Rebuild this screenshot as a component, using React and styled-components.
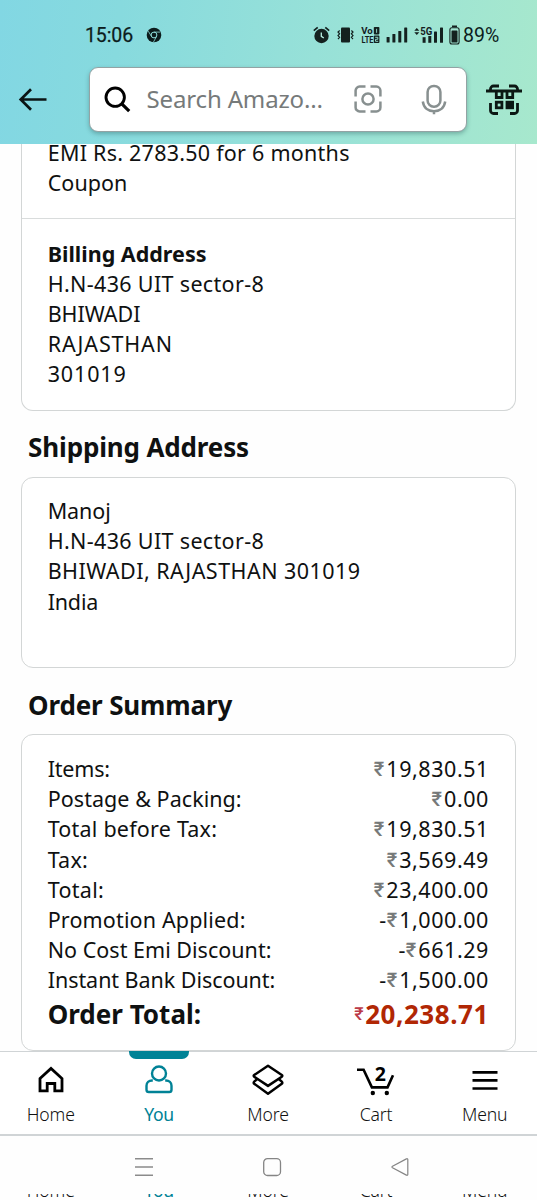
import React from 'react';
import styled, { createGlobalStyle } from 'styled-components';

const GlobalStyle = createGlobalStyle`
  * { box-sizing: border-box; }
  body {
    margin: 0;
    background: #fff;
    color: #0f1111;
    font-family: "Noto Sans", "Open Sans", sans-serif;
  }
  svg { display: block; flex: none; }
`;

const Screen = styled.div`
  width: 537px;
  height: 1200px;
  display: flex;
  flex-direction: column;
  overflow: hidden;
  background: #fefefe;
`;

const Header = styled.header`
  flex: none;
  height: 144px;
  display: flex;
  flex-direction: column;
  background: linear-gradient(96deg, #82d7e3 0%, #87dade 22%, #97e1d8 58%, #a7e8cd 100%);
  z-index: 1;
`;

const StatusBar = styled.div`
  height: 67px;
  padding: 3px 38px 0 85px;
  display: flex;
  align-items: center;
  font-family: Roboto, sans-serif;
  color: #0c1c1c;
`;

const Clock = styled.span`
  width: 61px;
  font-size: 19.5px;
  font-weight: 400;
  letter-spacing: -0.1px;
  -webkit-text-stroke: 0.25px #0c1c1c;
`;

const StatusIcons = styled.div`
  margin-left: auto;
  margin-top: -1px;
  display: flex;
  align-items: center;
`;

const Spaced = styled.div`
  display: flex;
  align-items: center;
  margin-right: ${(p) => p.$gap}px;
`;

const BatteryLevel = styled.span`
  margin: 2px 0 0 3px;
  width: 36px;
  font-size: 19.5px;
  white-space: nowrap;
`;

const SearchRow = styled.div`
  flex: 1;
  display: flex;
  align-items: flex-start;
`;

const IconSlot = styled.div`
  width: ${(p) => p.$width}px;
  height: 65px;
  display: flex;
  align-items: center;
  justify-content: center;
`;

const BackSlot = styled(IconSlot)`
  padding-right: 23px;
`;

const ScanSlot = styled(IconSlot)`
  padding-left: 5px;
`;

const SearchBox = styled.div`
  width: 378px;
  height: 64.5px;
  display: flex;
  align-items: center;
  padding-left: 14px;
  background: #fff;
  border: 1px solid #93a3a4;
  border-radius: 9px;
  box-shadow: 0 2px 4px rgba(40, 90, 90, 0.38);
`;

const Placeholder = styled.span`
  margin-left: 16px;
  width: 207px;
  font-size: 24px;
  line-height: 32px;
  letter-spacing: -0.15px;
  color: #767a7a;
  white-space: nowrap;
`;

const MicSlot = styled.div`
  margin-left: 39px;
`;

const Content = styled.main`
  flex: none;
  height: 907px;
  padding: 0 21.4px;
  overflow: hidden;
`;

const Card = styled.section`
  height: ${(p) => p.$height}px;
  border: 1.5px solid #d3d6d6;
  border-radius: 12px;
  background: #fff;
`;

const PaymentCard = styled(Card)`
  border-top: 0;
  border-radius: 0 0 12px 12px;
`;

const Block = styled.div`
  padding: ${(p) => p.$top}px 25.7px 0 25.3px;
`;

const PaymentBlock = styled(Block)`
  height: 75px;
  display: flex;
  flex-direction: column;
  justify-content: flex-end;
  padding-bottom: 20px;
  border-bottom: 1px solid #d9dcdc;
`;

const Line = styled.div`
  flex: none;
  font-size: 21.5px;
  line-height: 30.2px;
  height: 30.2px;
  font-weight: ${(p) => (p.$bold ? 700 : 400)};
  letter-spacing: ${(p) => p.$track || 0}px;
  white-space: nowrap;
`;

const Heading = styled.h2`
  margin: 0;
  height: ${(p) => p.$height}px;
  padding: ${(p) => p.$top}px 0 0 6.7px;
  font-size: 26px;
  line-height: 36px;
  font-weight: 700;
  letter-spacing: -0.15px;
`;

const SummaryRow = styled.div`
  display: flex;
  justify-content: space-between;
`;

const Amount = styled(Line)`
  display: flex;
  letter-spacing: 0.55px;
`;

const Rupee = styled.span`
  width: 12.5px;
  font-family: Roboto, sans-serif;
  font-size: 20px;
  font-weight: 500;
  letter-spacing: 0;
  color: #767979;
  text-align: left;
`;

const TotalRow = styled(SummaryRow)`
  height: 36px;
  font-size: 26px;
  line-height: 36px;
  font-weight: 700;
  letter-spacing: 0;
`;

const TotalAmount = styled.div`
  display: flex;
  color: #b12704;
  letter-spacing: 0.55px;
`;

const TotalRupee = styled(Rupee)`
  width: 11px;
  font-size: 18px;
  font-weight: 500;
  color: #bb3a48;
`;

const TabBar = styled.nav`
  flex: none;
  height: 85px;
  display: grid;
  grid-template-columns: 101.5px 115px 103px 113px 104.5px;
  border-top: 1.5px solid #d0d4d6;
  border-bottom: 2px solid #d0d4d6;
  background: #fff;
`;

const Tab = styled.div`
  position: relative;
  display: flex;
  flex-direction: column;
  align-items: center;
  color: ${(p) => (p.$active ? '#008296' : '#111')};
`;

const ActiveMark = styled.div`
  position: absolute;
  top: -1px;
  width: 60px;
  height: 7.5px;
  border-radius: 0 0 7px 7px;
  background: #008296;
`;

const TabIcon = styled.div`
  height: 49px;
  padding-top: 12px;
`;

const TabLabel = styled.span`
  font-size: 17.6px;
  line-height: 26px;
  font-weight: ${(p) => (p.$active ? 400 : 300)};
  letter-spacing: ${(p) => (p.$active ? -0.4 : -0.15)}px;
`;

const SystemBar = styled.div`
  flex: none;
  height: 57.500px;
  padding-top: 4px;
  display: flex;
  align-items: center;
  padding-left: 133.500px;
  gap: 108px;
`;

const LabelStrip = styled.div`
  flex: none;
  height: 3px;
  display: grid;
  grid-template-columns: 101.5px 115px 103px 113px 104.5px;
  justify-items: center;
  align-items: start;
  overflow: hidden;
`;

const StripLabel = styled(TabLabel)`
  height: 26px;
  margin-top: -17px;
  color: ${(p) => (p.$active ? '#008296' : '#111')};
`;

const ChromeIcon = () => (
  <svg width="16" height="16" viewBox="0 0 16 16" fill="none">
    <circle cx="8" cy="8" r="7.3" fill="#0c1c1c" />
    <circle cx="8" cy="8" r="2.9" stroke="#8fdedb" strokeWidth="1" />
    <path d="M8 5.1h6.2M5.5 9.5L2.3 4.2M10.5 9.500L7.500 15" stroke="#8fdedb" strokeWidth="0.8" />
  </svg>
);

const AlarmIcon = () => (
  <svg width="17" height="18" viewBox="0 0 17 18" fill="none" stroke="#14211f">
    <circle cx="8.5" cy="10" r="7.2" fill="#14211f" stroke="none" />
    <path d="M.8 4.7L4.7 1.4M16.2 4.7l-3.9-3.3" strokeWidth="1.7" />
    <path d="M8.3 6.500v3.800l2.500 1.700" stroke="#b6efe2" strokeWidth="1.3" />
  </svg>
);

const VibrateIcon = () => (
  <svg width="17" height="16" viewBox="0 0 17 16" fill="none" stroke="#14211f">
    <rect x="4" y="0.5" width="9" height="15" rx="1" fill="#14211f" stroke="none" />
    <path d="M2.7 3.5L1 5l1.6 1.8L1 8.6l1.6 1.7L1 12M14.4 3.5L16 5l-1.6 1.8L16 8.6l-1.6 1.7L16 12" strokeWidth="1.2" />
  </svg>
);

const VolteIcon = () => (
  <svg width="19" height="18" viewBox="0 0 19 18" fill="#14211f" fontFamily="Roboto, sans-serif" fontWeight="700">
    <text x="0.3" y="8.200" fontSize="9.500" textLength="11.500" lengthAdjust="spacingAndGlyphs">Vo</text>
    <text x="0.5" y="16.800" fontSize="9.500" textLength="12" lengthAdjust="spacingAndGlyphs">LTE</text>
    <rect x="12.8" y="1" width="5.6" height="7.4" rx="0.8" />
    <rect x="12.8" y="9.6" width="5.6" height="7.4" rx="0.8" />
    <path d="M15.6 2.8v4M14.200 11.300h2.600v2h-2.300v2h2.700" fill="none" stroke="#9be3d6" strokeWidth="0.9" />
  </svg>
);

const SignalIcon = () => (
  <svg width="22" height="16" viewBox="0 0 22 16" fill="#14211f">
    <rect x="0.6" y="10" width="3" height="5.6" rx="0.6" />
    <rect x="6.4" y="7" width="3" height="8.6" rx="0.6" />
    <rect x="12.3" y="4" width="3" height="11.6" rx="0.6" />
    <rect x="18.2" y="0.4" width="3" height="15.2" rx="0.6" />
  </svg>
);

const Signal5GIcon = () => (
  <svg width="30" height="18" viewBox="0 0 30 18" fill="#14211f">
    <path d="M.3 4.800L2.800 2l2.500 2.800zM.3 6.200l2.500 2.800 2.500-2.800z" />
    <text x="6.3" y="8.900" fontSize="10.500" fontWeight="700" fontFamily="Roboto, sans-serif" textLength="12" lengthAdjust="spacingAndGlyphs">5G</text>
    <rect x="8.6" y="11.2" width="3" height="5.6" />
    <rect x="14.3" y="10" width="3" height="6.8" />
    <rect x="20" y="5.6" width="3" height="11.2" rx="0.6" />
    <rect x="26" y="1.5" width="3" height="15.3" rx="0.6" />
  </svg>
);

const BatteryIcon = () => (
  <svg width="11" height="20" viewBox="0 0 11 20" fill="none">
    <path d="M3 .5h5v1.700H3z" fill="#14211f" />
    <rect x="0.9" y="2.7" width="9.2" height="16.3" rx="2" stroke="#14211f" strokeWidth="1.1" />
    <rect x="2.5" y="5.500" width="6" height="12" rx="0.6" fill="#14211f" />
  </svg>
);

const BackIcon = () => (
  <svg width="30" height="26" viewBox="0 0 30 26" fill="none" stroke="#0b1414" strokeWidth="2.700">
    <path d="M28.500 12.500H3M13 2.200L2.700 12.500 13 22.800" />
  </svg>
);

const SearchIcon = () => (
  <svg width="27" height="27" viewBox="0 0 27 27" fill="none" stroke="#000" strokeWidth="2.9">
    <circle cx="11.2" cy="11.2" r="9.2" />
    <path d="M17.8 17.8l7.4 7.4" strokeWidth="3.2" />
  </svg>
);

const LensIcon = () => (
  <svg width="28" height="28" viewBox="0 0 28 28" fill="none" stroke="#889090" strokeWidth="2.5">
    <circle cx="14" cy="14" r="5.6" />
    <path d="M1.6 11.500V5.600a4 4 0 0 1 4-4h5.900M16.500 1.600h5.900a4 4 0 0 1 4 4v5.900M26.400 16.500v5.900a4 4 0 0 1-4 4h-5.900M11.500 26.400H5.600a4 4 0 0 1-4-4v-5.900" />
  </svg>
);

const MicIcon = () => (
  <svg width="26" height="31" viewBox="0 0 26 31" fill="none" stroke="#889090" strokeWidth="2.5">
    <rect x="6.6" y="1.9" width="12.8" height="20.8" rx="6.2" />
    <path d="M1.8 17.5c.8 6.2 5.4 9.7 11.2 9.7s10.4-3.5 11.2-9.7M13 27v3.3" />
  </svg>
);

const CodeScanIcon = () => (
  <svg width="36" height="32" viewBox="0 0 36 32" fill="none" stroke="#0b1713" strokeWidth="2.8">
    <path d="M0 7h36" strokeWidth="3" />
    <path d="M4.5 6.500V5a3 3 0 0 1 3-3h5.500M23 2h5.500a3 3 0 0 1 3 3v1.500M31.500 19v7.500a3 3 0 0 1-3 3H24M12 29.500H7.500a3 3 0 0 1-3-3V19" />
    <path d="M10.300 7.500v6H16v-6M21 7.500v6h5.700v-6" />
    <rect x="10.300" y="18.200" width="5.600" height="5.600" />
    <rect x="21" y="18.200" width="5.600" height="5.600" fill="#0b1713" />
  </svg>
);

const HomeIcon = () => (
  <svg width="32" height="34" viewBox="0 0 32 34" fill="none" stroke="#000" strokeWidth="2.8">
    <path d="M5 14.5l11-10 11 10v12.300h-7.200v-7.300h-7.600v7.300H5z" />
  </svg>
);

const YouIcon = () => (
  <svg width="32" height="34" viewBox="0 0 32 34" fill="none" stroke="#008296" strokeWidth="2.4">
    <circle cx="16" cy="9.500" r="7" />
    <path d="M9.8 16.500H9c-3 0-5.500 2.200-5.500 5.200v4c0 1.500 1 2.300 2.300 2.300h20.400c1.300 0 2.300-.8 2.300-2.300v-4c0-3-2.500-5.200-5.500-5.200h-.8" />
  </svg>
);

const MoreIcon = () => (
  <svg width="34" height="34" viewBox="0 0 34 34" fill="none" stroke="#000" strokeWidth="2.5" strokeLinejoin="round">
    <path d="M17 1.700L30.800 11c.7.500.7 1.200 0 1.700L17 21.900 3.200 12.700c-.7-.5-.7-1.200 0-1.700z" />
    <path d="M6 15.300l-2.800 2.300c-.7.6-.7 1.600 0 2.100L17 29.700l13.800-10c.7-.5.7-1.500 0-2.100L28 15.300" />
  </svg>
);

const CartIcon = () => (
  <svg width="40" height="34" viewBox="0 0 40 34" fill="none" stroke="#000" strokeWidth="2.6">
    <path d="M1 5.700h6.600l8.300 17.700h15.600L37 11.200" />
    <circle cx="16.800" cy="29" r="2.200" fill="#000" stroke="none" />
    <circle cx="30.800" cy="29" r="2.200" fill="#000" stroke="none" />
    <text x="18.800" y="16.800" fontSize="19.500" fontWeight="700" fontFamily="Noto Sans, sans-serif" fill="#000" stroke="none">2</text>
  </svg>
);

const MenuIcon = () => (
  <svg width="26" height="34" viewBox="0 0 26 34" fill="none" stroke="#000" strokeWidth="2.7">
    <path d="M.5 8.300h25M.5 16.400h25M.5 24.500h25" />
  </svg>
);

const RecentsIcon = () => (
  <svg width="20" height="20" viewBox="0 0 20 20" fill="none" stroke="#8b8b8b" strokeWidth="1.6">
    <path d="M1 1.800h18M1 10h18M1 18.200h18" />
  </svg>
);

const SystemHomeIcon = () => (
  <svg width="20" height="20" viewBox="0 0 20 20" fill="none" stroke="#858585" strokeWidth="1.3">
    <rect x="1.700" y="1.700" width="16.800" height="16.800" rx="3.800" />
  </svg>
);

const SystemBackIcon = () => (
  <svg width="20" height="20" viewBox="0 0 20 20" fill="none" stroke="#858585" strokeWidth="1.2" strokeLinejoin="round">
    <path d="M17.800 2.600v14.800c0 .8-.7 1.100-1.400.7L2.500 10.800c-.7-.4-.7-1.200 0-1.600l13.900-7.300c.7-.4 1.400-.1 1.400.7z" />
  </svg>
);

const billing = [
  ['H.N-436 UIT sector-8', 0.34],
  ['BHIWADI', -0.05],
  ['RAJASTHAN', 0.85],
  ['301019', 0.85],
];

const shipping = [
  ['Manoj', -0.1],
  ['H.N-436 UIT sector-8', 0.34],
  ['BHIWADI, RAJASTHAN 301019', 0.46],
  ['India', -0.2],
];

const summary = [
  ['Items:', '', '19,830.51', -0.2],
  ['Postage & Packing:', '', '0.00', 0.05],
  ['Total before Tax:', '', '19,830.51', 0.22],
  ['Tax:', '', '3,569.49', 0.2],
  ['Total:', '', '23,400.00', 0.3],
  ['Promotion Applied:', '-', '1,000.00', 0.15],
  ['No Cost Emi Discount:', '-', '661.29', 0.02],
  ['Instant Bank Discount:', '-', '1,500.00', -0.05],
];

const tabs = [
  ['Home', HomeIcon],
  ['You', YouIcon],
  ['More', MoreIcon],
  ['Cart', CartIcon],
  ['Menu', MenuIcon],
];

export default function App() {
  return (
    <Screen>
      <GlobalStyle />
      <Header>
        <StatusBar>
          <Clock>15:06</Clock>
          <ChromeIcon />
          <StatusIcons>
            <Spaced $gap={7}><AlarmIcon /></Spaced>
            <Spaced $gap={7}><VibrateIcon /></Spaced>
            <Spaced $gap={6}><VolteIcon /></Spaced>
            <Spaced $gap={6}><SignalIcon /></Spaced>
            <Spaced $gap={5}><Signal5GIcon /></Spaced>
            <BatteryIcon />
            <BatteryLevel>89%</BatteryLevel>
          </StatusIcons>
        </StatusBar>
        <SearchRow>
          <BackSlot $width={88.5}><BackIcon /></BackSlot>
          <SearchBox>
            <SearchIcon />
            <Placeholder>Search Amazo…</Placeholder>
            <LensIcon />
            <MicSlot><MicIcon /></MicSlot>
          </SearchBox>
          <ScanSlot $width={70.5}><CodeScanIcon /></ScanSlot>
        </SearchRow>
      </Header>

      <Content>
        <PaymentCard $height={266.5}>
          <PaymentBlock $top={0}>
            <Line $track={0.25}>EMI Rs. 2783.50 for 6 months</Line>
            <Line $track={0.05}>Coupon</Line>
          </PaymentBlock>
          <Block $top={19.5}>
            <Line $bold $track={0}>Billing Address</Line>
            {billing.map(([text, track]) => (
              <Line key={text} $track={track}>{text}</Line>
            ))}
          </Block>
        </PaymentCard>

        <Heading $height={66} $top={18.5}>Shipping Address</Heading>
        <Card $height={191.8}>
          <Block $top={18.6}>
            {shipping.map(([text, track]) => (
              <Line key={text} $track={track}>{text}</Line>
            ))}
          </Block>
        </Card>

        <Heading $height={66} $top={18.8}>Order Summary</Heading>
        <Card $height={316.5}>
          <Block $top={18.8}>
            {summary.map(([label, sign, value, track]) => (
              <SummaryRow key={label}>
                <Line $track={track}>{label}</Line>
                <Amount>{sign}<Rupee>₹</Rupee>{value}</Amount>
              </SummaryRow>
            ))}
            <TotalRow>
              <span>Order Total:</span>
              <TotalAmount><TotalRupee>₹</TotalRupee>20,238.71</TotalAmount>
            </TotalRow>
          </Block>
        </Card>
      </Content>

      <TabBar>
        {tabs.map(([label, Icon]) => (
          <Tab key={label} $active={label === 'You'}>
            {label === 'You' && <ActiveMark />}
            <TabIcon><Icon /></TabIcon>
            <TabLabel $active={label === 'You'}>{label}</TabLabel>
          </Tab>
        ))}
      </TabBar>

      <SystemBar>
        <RecentsIcon />
        <SystemHomeIcon />
        <SystemBackIcon />
      </SystemBar>
      <LabelStrip>
        {tabs.map(([label]) => (
          <StripLabel key={label} $active={label === 'You'}>{label}</StripLabel>
        ))}
      </LabelStrip>
    </Screen>
  );
}
